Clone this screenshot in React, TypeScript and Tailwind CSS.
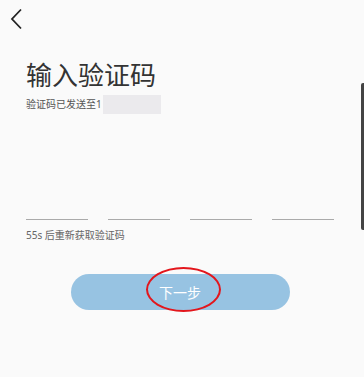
import React from "react";

export default function App() {
  const font = { fontFamily: '"Noto Sans", "Noto Sans CJK SC", sans-serif' };
  return (
    <div
      className="relative h-[377px] w-[364px] overflow-hidden bg-[#fafafa]"
      style={font}
    >
      {/* back */}
      <div className="pl-[10px] pt-[8px]">
        <svg width="14" height="22" viewBox="0 0 14 22" fill="none">
          <path d="M11 1.5L2 11l9 9.5" stroke="#222" strokeWidth="1.8" />
        </svg>
      </div>

      <div className="pl-[26px] pr-[30px]">
        <h1 className="mt-[28px] text-[26px] leading-[34px] text-[#333]" style={font}>
          输入验证码
        </h1>
        <div className="mt-[2px] flex items-center text-[10px] leading-[20px] text-[#555]">
          <span>验证码已发送至1</span>
          <span className="ml-[1px] h-[19px] w-[58px] bg-[#ebeaed]" />
        </div>

        <div className="mt-[105px] grid grid-cols-4 gap-[20px]">
          <div className="h-px bg-[#aaa]" />
          <div className="h-px bg-[#aaa]" />
          <div className="h-px bg-[#aaa]" />
          <div className="h-px bg-[#aaa]" />
        </div>
        <p className="mt-[8px] text-[10px] leading-[14px] text-[#666]">
          55s 后重新获取验证码
        </p>

        <div className="mt-[32px] flex justify-center">
          <button className="relative h-[36px] w-[219px] rounded-full bg-[#97c3e2] text-[14px] text-white">
            下一步
            <span className="absolute left-[75px] top-[-7px] h-[45px] w-[75px] rounded-[50%] border-2 border-[#e3161c]" />
          </button>
        </div>
      </div>

      {/* scroll indicator */}
      <div className="absolute right-0 top-[83px] h-[147px] w-[3px] rounded-l-[2px] bg-[#444]" />
    </div>
  );
}
